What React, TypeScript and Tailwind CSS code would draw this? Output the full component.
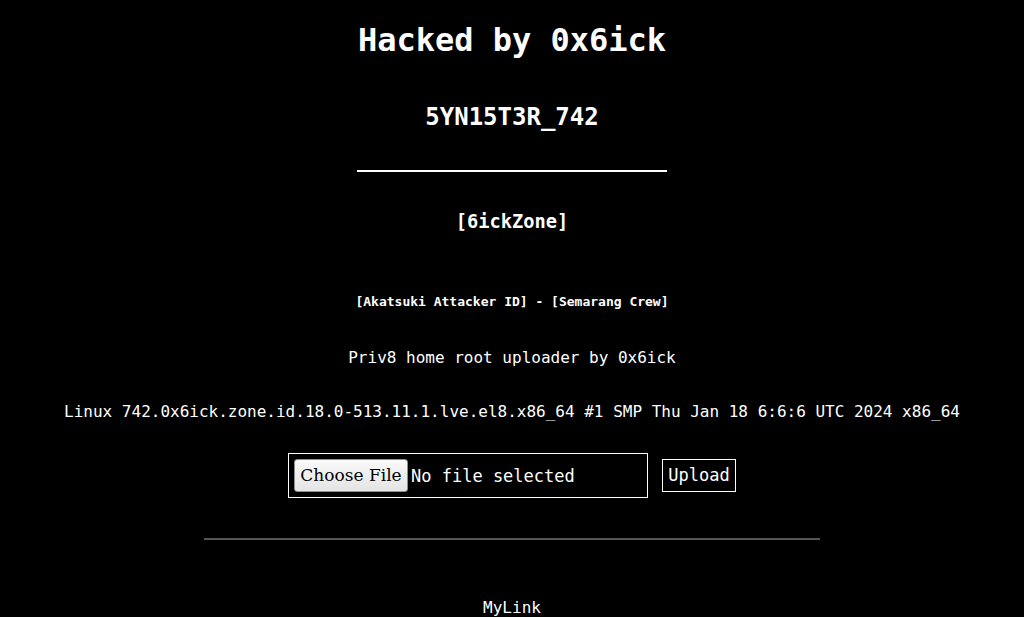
/*
 * Uploader landing — black mono page, centered headings + fake file form
 */
export default function App() {
  return (
    <div className="min-h-screen bg-black text-white text-center font-['DejaVu_Sans_Mono',monospace] overflow-hidden">
      <h1 className="pt-[20px] text-[32px] leading-[40px] font-bold">Hacked by 0x6ick</h1>
      <h2 className="mt-[41px] text-[24px] leading-[32px] font-bold">5YN15T3R_742</h2>

      <div className="mx-auto mt-[37px] h-[2px] w-[310px] bg-white" />

      <h3 className="mt-[38px] text-[18.72px] leading-[24px] font-bold">[6ickZone]</h3>

      <h5 className="mt-[60px] text-[13px] leading-[16px] font-bold">
        [Akatsuki Attacker ID] - [Semarang Crew]
      </h5>

      <p className="mt-[38px] text-[16px] leading-[20px]">Priv8 home root uploader by 0x6ick</p>

      <p className="mt-[34px] text-[16px] leading-[20px] whitespace-nowrap">
        Linux 742.0x6ick.zone.id.18.0-513.11.1.lve.el8.x86_64 #1 SMP Thu Jan 18 6:6:6 UTC 2024 x86_64
      </p>

      {/* Upload form */}
      <form className="mt-[31px] flex items-center justify-center gap-[14px]">
        <label className="flex h-[45px] w-[360px] items-center gap-[3px] border border-white px-[5px]">
          <span className="flex h-[33px] w-[114px] items-center justify-center rounded-[3px] border border-[#8f8f8f] bg-gradient-to-b from-[#fafafa] to-[#e4e4e4] font-['DejaVu_Serif',serif] text-[17px] text-black">
            Choose File
          </span>
          <span className="text-[17px] leading-[20px]">No file selected</span>
        </label>
        <button
          type="button"
          className="flex h-[33px] w-[74px] items-center justify-center border border-white bg-black text-[17px] text-white"
        >
          Upload
        </button>
      </form>

      <div className="mx-auto mt-[40px] h-[2px] w-[616px] bg-[#555555]" />

      <p className="mt-[58px] text-[16px] leading-[20px]">
        <a href="#" className="text-white">MyLink</a>
      </p>
    </div>
  );
}
